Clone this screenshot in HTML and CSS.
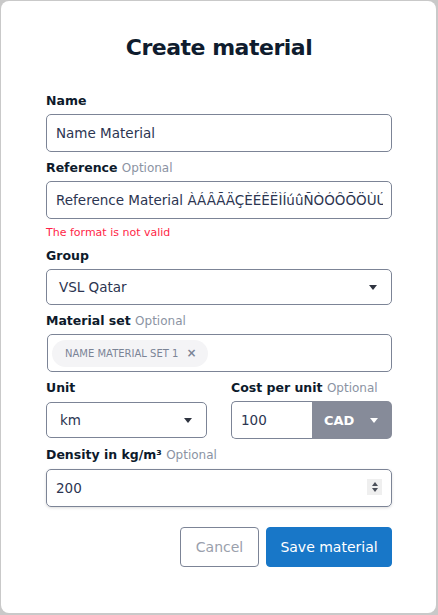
FILE: index.html
```html
<!DOCTYPE html>
<html lang="en">
<head>
<meta charset="utf-8">
<title>Create material</title>
<link rel="stylesheet" href="styles.css">
</head>
<body>
<div class="card">
  <h1 class="title">Create material</h1>
  <form class="form">
    <div class="field">
      <label class="label">Name</label>
      <input class="input" type="text" value="Name Material">
    </div>
    <div class="field">
      <label class="label">Reference <span class="opt">Optional</span></label>
      <input class="input" type="text" value="Reference Material ÀÁÂÃÄÇÈÉÊËÌÍúûÑÒÓÔÕÖÙÚÛÜ">
      <div class="error">The format is not valid</div>
    </div>
    <div class="field">
      <label class="label">Group</label>
      <div class="select select-wide"><span class="select-text">VSL Qatar</span><span class="caret"></span></div>
    </div>
    <div class="field">
      <label class="label">Material set <span class="opt">Optional</span></label>
      <div class="tags"><span class="chip">NAME MATERIAL SET 1<span class="chip-x">×</span></span></div>
    </div>
    <div class="row">
      <div class="field">
        <label class="label">Unit</label>
        <div class="ctrl-slot">
          <div class="select select-unit"><span class="select-text">km</span><span class="caret"></span></div>
        </div>
      </div>
      <div class="field">
        <label class="label">Cost per unit <span class="opt">Optional</span></label>
        <div class="ctrl-slot">
          <div class="group">
            <input class="group-input" type="text" value="100">
            <div class="addon"><span class="addon-text">CAD</span><span class="caret caret-white"></span></div>
          </div>
        </div>
      </div>
    </div>
    <div class="field">
      <label class="label label-density">Density in kg/m³ <span class="opt">Optional</span></label>
      <div class="numbox">
        <input class="num-input" type="text" value="200">
        <span class="spin"><span class="spin-up"></span><span class="spin-down"></span></span>
      </div>
    </div>
    <div class="actions">
      <button type="button" class="btn btn-cancel">Cancel</button>
      <button type="button" class="btn btn-save">Save material</button>
    </div>
  </form>
</div>
</body>
</html>
```

FILE: styles.css
```css
* {
  box-sizing: border-box;
}

html, body {
  margin: 0;
  padding: 0;
}

body {
  width: 438px;
  height: 615px;
  background: #c9c9c9;
  font-family: "DejaVu Sans", "Liberation Sans", sans-serif;
  overflow: hidden;
}

.card {
  margin: 1px 0 0 1px;
  width: 435px;
  height: 612px;
  background: #ffffff;
  border-radius: 8px;
  padding: 34px 44px 0 45px;
}

.title {
  margin: 0;
  font-size: 22px;
  line-height: 26px;
  font-weight: bold;
  letter-spacing: -0.5px;
  text-align: center;
  color: #0f1c2e;
}

.form {
  margin-top: 32px;
  display: flex;
  flex-direction: column;
  gap: 8px;
}

.field {
  display: flex;
  flex-direction: column;
}

.label {
  font-size: 12.5px;
  line-height: 16px;
  font-weight: bold;
  color: #0d1a2b;
  margin-bottom: 5px;
  white-space: nowrap;
}

.label-density {
  margin-bottom: 6px;
}

.opt {
  font-size: 12px;
  font-weight: normal;
  color: #8b93a3;
}

.input {
  display: block;
  width: 346px;
  height: 38px;
  margin: 0;
  padding: 0 8px 0 9px;
  border: 1px solid #7c8496;
  border-radius: 5px;
  font-family: "DejaVu Sans", "Liberation Sans", sans-serif;
  font-size: 13.5px;
  color: #2c3551;
  background: #ffffff;
  outline: none;
}

.error {
  margin-top: 7px;
  font-size: 11px;
  line-height: 14px;
  color: #ff1f48;
}

.select {
  display: flex;
  align-items: center;
  justify-content: space-between;
  height: 36px;
  border: 1px solid #7c8496;
  border-radius: 5px;
  font-size: 13.5px;
  color: #2c3551;
  background: #ffffff;
}

.select-wide {
  width: 346px;
  padding: 0 14px 0 12px;
}

.select-unit {
  width: 161px;
  padding: 0 14px 0 13px;
}

.caret {
  width: 0;
  height: 0;
  border-left: 4px solid transparent;
  border-right: 4px solid transparent;
  border-top: 5px solid #2f3440;
}

.caret-white {
  border-top-color: #ffffff;
}

.tags {
  display: flex;
  align-items: center;
  width: 345px;
  height: 38px;
  margin-left: 1px;
  padding: 0 4px;
  border: 1px solid #7c8496;
  border-radius: 5px;
}

.chip {
  display: flex;
  align-items: center;
  height: 27px;
  padding: 0 12px 0 13px;
  border-radius: 14px;
  background: #f4f4f6;
  font-size: 10px;
  color: #7b8496;
  white-space: nowrap;
}

.chip-x {
  margin-left: 8px;
  font-size: 12px;
  font-weight: bold;
  color: #7b8496;
}

.row {
  display: grid;
  grid-template-columns: 161px 161px;
  column-gap: 24px;
}

.ctrl-slot {
  height: 38px;
  display: flex;
  align-items: center;
}

.group {
  display: flex;
  width: 161px;
  height: 38px;
}

.group-input {
  width: 81px;
  height: 38px;
  margin: 0;
  padding: 0 6px 0 9px;
  border: 1px solid #7c8496;
  border-right: none;
  border-radius: 5px 0 0 5px;
  font-family: "DejaVu Sans", "Liberation Sans", sans-serif;
  font-size: 13.5px;
  color: #2c3551;
  outline: none;
}

.addon {
  flex: 1;
  display: flex;
  align-items: center;
  padding-left: 12px;
  gap: 16px;
  background: #868b99;
  border-radius: 0 5px 5px 0;
}

.addon-text {
  font-size: 13px;
  font-weight: bold;
  color: #ffffff;
}

.numbox {
  display: flex;
  align-items: center;
  width: 346px;
  height: 38px;
  padding: 0 9px 0 9px;
  border: 1px solid #7c8496;
  border-radius: 5px;
  box-shadow: 0 1px 3px rgba(0, 0, 0, 0.14);
}

.num-input {
  flex: 1;
  min-width: 0;
  height: 36px;
  margin: 0;
  padding: 0;
  border: none;
  font-family: "DejaVu Sans", "Liberation Sans", sans-serif;
  font-size: 13.5px;
  color: #2c3551;
  outline: none;
  background: transparent;
}

.spin {
  display: flex;
  flex-direction: column;
  align-items: center;
  justify-content: center;
  gap: 2px;
  width: 15px;
  height: 16px;
  margin-top: -3px;
  background: #efefef;
}

.spin-up {
  width: 0;
  height: 0;
  border-left: 3.5px solid transparent;
  border-right: 3.5px solid transparent;
  border-bottom: 4px solid #4a4f59;
}

.spin-down {
  width: 0;
  height: 0;
  border-left: 3.5px solid transparent;
  border-right: 3.5px solid transparent;
  border-top: 4px solid #4a4f59;
}

.actions {
  display: flex;
  justify-content: flex-end;
  gap: 7px;
  margin-top: 12px;
}

.btn {
  height: 40px;
  margin: 0;
  padding: 0;
  border-radius: 4px;
  font-family: "DejaVu Sans", "Liberation Sans", sans-serif;
  font-size: 14px;
  cursor: pointer;
}

.btn-cancel {
  width: 79px;
  background: #ffffff;
  border: 1px solid #7c8496;
  color: #9aa0ac;
}

.btn-save {
  width: 126px;
  background: #1877c8;
  border: 1px solid #1877c8;
  color: #ffffff;
}
```
